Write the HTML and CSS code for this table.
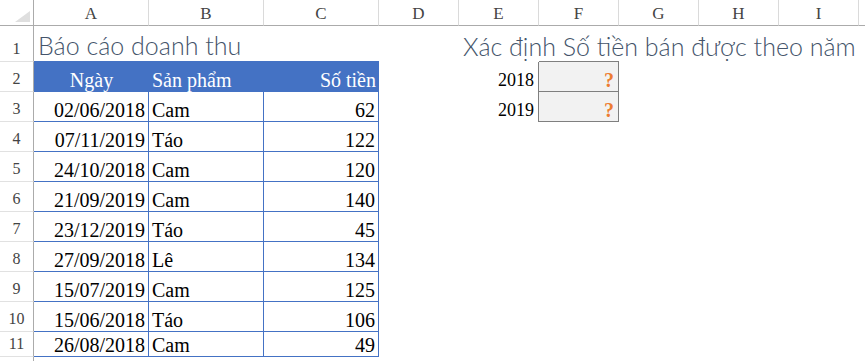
FILE: index.html
```html
<!DOCTYPE html>
<html lang="vi">
<head>
<meta charset="utf-8">
<title>Báo cáo doanh thu</title>
<link rel="stylesheet" href="styles.css">
</head>
<body>
<div class="sheet">
  <!-- column headers -->
  <div class="ch corner"><span class="corner-tri"></span></div>
  <div class="ch">A</div><div class="ch">B</div><div class="ch">C</div>
  <div class="ch">D</div><div class="ch">E</div><div class="ch">F</div>
  <div class="ch">G</div><div class="ch">H</div><div class="ch">I</div>
  <div class="ch last"></div>

  <!-- row 1 -->
  <div class="rh">1</div>
  <div class="c tb-top title">Báo cáo doanh thu</div>
  <div class="c tb-top"></div><div class="c tb-top"></div>
  <div class="c"></div>
  <div class="c title">Xác định Số tiền bán được theo năm</div>
  <div class="c box-top"></div>
  <div class="c"></div><div class="c"></div><div class="c"></div><div class="c"></div>

  <!-- row 2 -->
  <div class="rh">2</div>
  <div class="c th center">Ngày</div>
  <div class="c th">Sản phẩm</div>
  <div class="c th right">Số tiền</div>
  <div class="c"></div>
  <div class="c right year box-left">2018</div>
  <div class="c box right"><span class="ask">?</span></div>
  <div class="c"></div><div class="c"></div><div class="c"></div><div class="c"></div>

  <!-- row 3 -->
  <div class="rh">3</div>
  <div class="c td right">02/06/2018</div><div class="c td">Cam</div><div class="c td right">62</div>
  <div class="c"></div>
  <div class="c right year box-left">2019</div>
  <div class="c box right"><span class="ask">?</span></div>
  <div class="c"></div><div class="c"></div><div class="c"></div><div class="c"></div>

  <!-- row 4 -->
  <div class="rh">4</div>
  <div class="c td right">07/11/2019</div><div class="c td">Táo</div><div class="c td right">122</div>
  <div class="c"></div><div class="c"></div><div class="c"></div><div class="c"></div><div class="c"></div><div class="c"></div><div class="c"></div>

  <!-- row 5 -->
  <div class="rh">5</div>
  <div class="c td right">24/10/2018</div><div class="c td">Cam</div><div class="c td right">120</div>
  <div class="c"></div><div class="c"></div><div class="c"></div><div class="c"></div><div class="c"></div><div class="c"></div><div class="c"></div>

  <!-- row 6 -->
  <div class="rh">6</div>
  <div class="c td right">21/09/2019</div><div class="c td">Cam</div><div class="c td right">140</div>
  <div class="c"></div><div class="c"></div><div class="c"></div><div class="c"></div><div class="c"></div><div class="c"></div><div class="c"></div>

  <!-- row 7 -->
  <div class="rh">7</div>
  <div class="c td right">23/12/2019</div><div class="c td">Táo</div><div class="c td right">45</div>
  <div class="c"></div><div class="c"></div><div class="c"></div><div class="c"></div><div class="c"></div><div class="c"></div><div class="c"></div>

  <!-- row 8 -->
  <div class="rh">8</div>
  <div class="c td right">27/09/2018</div><div class="c td">Lê</div><div class="c td right">134</div>
  <div class="c"></div><div class="c"></div><div class="c"></div><div class="c"></div><div class="c"></div><div class="c"></div><div class="c"></div>

  <!-- row 9 -->
  <div class="rh">9</div>
  <div class="c td right">15/07/2019</div><div class="c td">Cam</div><div class="c td right">125</div>
  <div class="c"></div><div class="c"></div><div class="c"></div><div class="c"></div><div class="c"></div><div class="c"></div><div class="c"></div>

  <!-- row 10 -->
  <div class="rh">10</div>
  <div class="c td right">15/06/2018</div><div class="c td">Táo</div><div class="c td right">106</div>
  <div class="c"></div><div class="c"></div><div class="c"></div><div class="c"></div><div class="c"></div><div class="c"></div><div class="c"></div>

  <!-- row 11 -->
  <div class="rh">11</div>
  <div class="c td right">26/08/2018</div><div class="c td">Cam</div><div class="c td right">49</div>
  <div class="c"></div><div class="c"></div><div class="c"></div><div class="c"></div><div class="c"></div><div class="c"></div><div class="c"></div>

  <!-- row 12 (cut off) -->
  <div class="rh"></div>
</div>
</body>
</html>
```
FILE: styles.css
```css
* { box-sizing: border-box; }

html, body {
  margin: 0;
  padding: 0;
  background: #ffffff;
  overflow: hidden;
}

.sheet {
  display: grid;
  grid-template-columns: 34px 115px 115px 115px 80px 80px 80px 80px 80px 80px 1fr;
  grid-template-rows: 26px 36px repeat(9, 30px) 25px 1fr;
  width: 865px;
  height: 361px;
  font-family: "Liberation Serif", "Times New Roman", serif;
  font-size: 20px;
  color: #000000;
}

/* column header strip */
.ch {
  border-right: 1px solid #dadada;
  border-bottom: 1px solid #ababab;
  display: flex;
  align-items: flex-end;
  justify-content: center;
  padding-bottom: 3px;
  font-size: 17px;
  color: #444444;
  line-height: 1;
}
.ch.last { border-right: none; }
.ch.corner {
  border-right: 1px solid #ababab;
  position: relative;
}
.corner-tri {
  position: absolute;
  right: 3px;
  bottom: 3px;
  width: 0;
  height: 0;
  border-left: 15px solid transparent;
  border-bottom: 11px solid #dfdfdf;
}

/* row header strip */
.rh {
  border-right: 1px solid #ababab;
  border-bottom: 1px solid #e1e1e1;
  display: flex;
  align-items: flex-end;
  justify-content: center;
  padding-bottom: 4px;
  font-size: 16px;
  color: #444444;
  line-height: 1;
}

/* ordinary cell */
.c {
  display: flex;
  align-items: flex-end;
  padding: 0 3px;
  white-space: nowrap;
  line-height: 1.1;
  min-width: 0;
}
.c.right { justify-content: flex-end; }
.c.center { justify-content: center; }

/* heading text */
.title {
  overflow: visible;
  font-family: "Lato", "Open Sans", sans-serif;
  font-weight: 300;
  font-size: 25px;
  color: #44546a;
  padding-left: 4px;
  padding-bottom: 3px;
  line-height: 1;
}

/* data table */
.tb-top { border-bottom: 1px solid #4472c4; }
.th {
  background: #4472c4;
  color: #ffffff;
  border-bottom: 1px solid #4472c4;
}
.td {
  border-right: 1px solid #4472c4;
  border-bottom: 1px solid #4472c4;
}

/* lookup box */
.year { font-size: 18px; padding-right: 4px; padding-bottom: 1px; }
.box-top { border-bottom: 1px solid #7f7f7f; }
.box-left { border-right: 1px solid #7f7f7f; }
.box {
  background: #f2f2f2;
  border-right: 1px solid #7f7f7f;
  border-bottom: 1px solid #7f7f7f;
  padding-right: 4px;
}
.ask { color: #ed7d31; font-weight: bold; }
```
